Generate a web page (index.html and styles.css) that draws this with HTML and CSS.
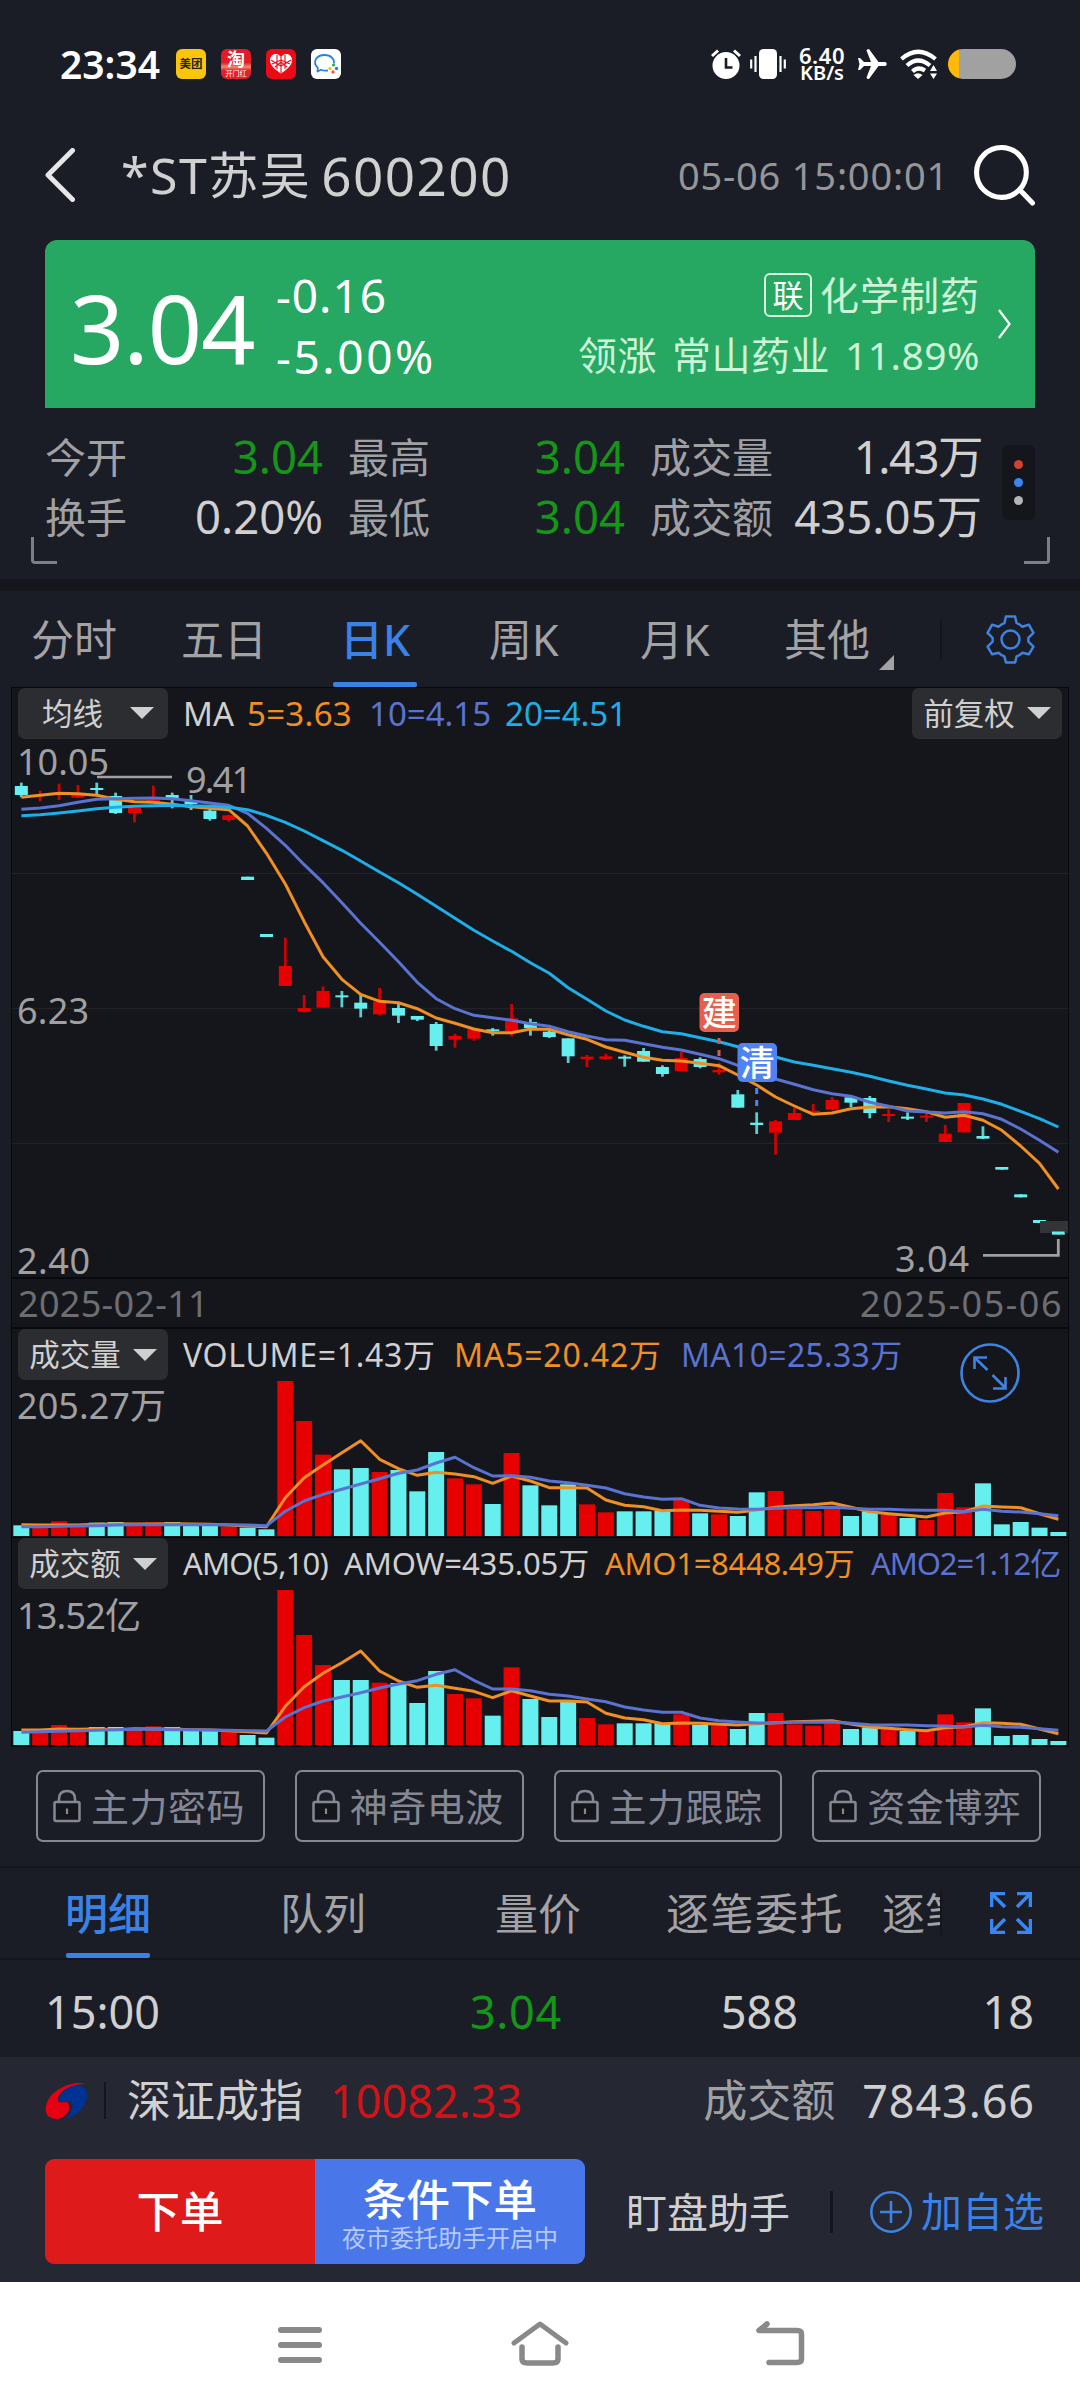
FILE: index.html
```html
<!DOCTYPE html>
<html lang="zh-CN">
<head>
<meta charset="utf-8">
<title>*ST苏吴 600200</title>
<link rel="stylesheet" href="styles.css">
</head>
<body>
<div class="phone">

<header class="status">
  <span class="clock">23:34</span>
  <span class="app meituan">美团</span>
  <span class="app taobao"><b>淘</b><i>开门红</i></span>
  <span class="app heart"><svg viewBox="0 0 30 30"><path d="M15 24.500C10 21 4 17 4 11.500C4 7.500 6.500 5 9.500 5C12 5 14 6.500 15 8.500C16 6.500 18 5 20.500 5C23.500 5 26 7.500 26 11.500C26 17 20 21 15 24.500Z" fill="#fff"/><path d="M15 8V24M11 6V20M19 6V20M5 11L15 17L25 11M6 15L15 11L24 15M9 18L15 13L21 18" stroke="#ee0a14" stroke-width="1.100" fill="none"/></svg></span>
  <span class="app wecom"><svg viewBox="0 0 30 30"><path d="M17 21.500C14 22 11.500 21.500 10 20.800L6.500 22.500L6.800 18.800C1 13.500 5 6 13.500 6C20 6 23.500 10 23 14.500" fill="none" stroke="#2383e2" stroke-width="1.800" stroke-linejoin="round"/><circle cx="22.500" cy="16" r="1.600" fill="#2fae3e"/><circle cx="25.500" cy="19.500" r="1.700" fill="#2383e2"/><circle cx="22" cy="23" r="1.700" fill="#f25b22"/><circle cx="19" cy="19.500" r="1.600" fill="#f9b912"/></svg></span>
  <span class="grow"></span>
  <svg class="s-alarm" viewBox="0 0 30 30"><circle cx="15" cy="16.500" r="13.500" fill="#fff"/><path d="M1 7L7 1.500M23 1.500L29 7" stroke="#fff" stroke-width="3"/><path d="M15 9V18.500H21.500" fill="none" stroke="#1b1d26" stroke-width="2.600"/></svg>
  <svg class="s-vibe" viewBox="0 0 36 30"><rect x="9" y="0" width="18" height="30" rx="4.500" fill="#fff"/><path d="M5.500 7V23M30.500 7V23M1.200 10.500V19.500M34.800 10.500V19.500" stroke="#fff" stroke-width="2.200"/></svg>
  <span class="speed"><span>6.40</span><span>KB/s</span></span>
  <svg class="s-plane" viewBox="0 0 30 30"><path d="M0 9H2L6 13H13L8.500 1.500Q8.500 0 11 0L20.500 13H27.500Q30 15 27.500 17H20.500L11 30Q8.500 30 8.500 28.500L13 17H6L2 21H0L1.500 15Z" fill="#fff"/></svg>
  <svg class="s-wifi" viewBox="0 0 38 30"><path d="M1.500 10Q18 -4.500 35.500 10M7 16.500Q18 6.500 30 16.500M12.500 22.500Q18 17 25 21.500" fill="none" stroke="#fff" stroke-width="4.200"/><path d="M13.500 26Q18 22.500 22.500 26L18 30Z" fill="#fff"/><path d="M33.500 16L37 22H30ZM33.500 30L37 24.500H30Z" fill="#fff"/></svg>
  <span class="battery"></span>
</header>

<nav class="titlebar">
  <svg class="back" viewBox="0 0 30 54"><path d="M27.500 2.500L3 27L27.500 51.500" fill="none" stroke="#e6e6e6" stroke-width="5" stroke-linecap="round" stroke-linejoin="round"/></svg>
  <h1><span>*ST苏吴</span><span>600200</span></h1>
  <time>05-06 15:00:01</time>
  <svg class="search" viewBox="0 0 60 60"><circle cx="27" cy="27" r="24.500" fill="none" stroke="#fff" stroke-width="5"/><path d="M45 44L57.500 57" stroke="#fff" stroke-width="5" stroke-linecap="round"/></svg>
</nav>

<section class="quote">
  <strong class="price">3.04</strong>
  <div class="change"><span>-0.16</span><span>-5.00%</span></div>
  <div class="sector">
    <div><em>联</em><span class="sec">化学制药</span></div>
    <div class="lead"><span>领涨</span><span>常山药业</span><span>11.89%</span></div>
  </div>
  <svg class="go" viewBox="0 0 15 30"><path d="M2 1L12.500 15L2 29" fill="none" stroke="#fff" stroke-width="2.200"/></svg>
</section>

<section class="stats">
  <div class="statgrid">
    <label>今开</label><b class="dn">3.04</b><label>最高</label><b class="dn">3.04</b><label>成交量</label><b class="tight">1.43万</b>
    <label>换手</label><b>0.20%</b><label>最低</label><b class="dn">3.04</b><label>成交额</label><b>435.05万</b>
  </div>
  <div class="dots"><i></i><i></i><i></i></div>
  <span class="corner left"></span><span class="corner right"></span>
</section>

<nav class="periods">
  <span>分时</span><span>五日</span><span class="on">日K</span><span>周K</span><span>月K</span><span class="more">其他</span>
  <svg class="gear" viewBox="0 0 48 48"><path d="M19.500 1.500H28.500L30 8Q33 9 35.500 11.500L42 9.500L46.500 17.500L41.500 22.500V26L46.500 31L42 38.500L35.500 37Q33 39.500 30 40.500L28.500 46.500H19.500L18 40.500Q15 39.500 12.500 37L6 38.500L1.500 31L6.500 26V22.500L1.500 17.500L6 9.500L12.500 11.500Q15 9 18 8Z" fill="none" stroke="#3f83e2" stroke-width="2.400" stroke-linejoin="round"/><circle cx="24" cy="24" r="8.800" fill="none" stroke="#3f83e2" stroke-width="2.400"/></svg>
</nav>

<main class="chart">
  <section class="pane price-pane">
    <div class="legend">
      <span class="pick wide">均线<i></i></span>
      <span class="w ma">MA</span><span class="o ma5">5=3.63</span><span class="p ma10">10=4.15</span><span class="c ma20">20=4.51</span>
      <span class="pick end">前复权<i></i></span>
    </div>
    <svg class="plot" id="kline" viewBox="12 738 1056 539">
      <path d="M12 873.500H1068M12 1008.500H1068M12 1143.500H1068" stroke="#212226" stroke-width="1.500"/>
      <g id="candles"></g>
      <path d="M97 777H172" stroke="#a0a0a3" stroke-width="2.500"/>
      <g class="axis">
        <text x="17" y="775" textLength="92">10.05</text>
        <text x="186" y="793" textLength="66">9.41</text>
        <text x="17" y="1024" textLength="72">6.23</text>
        <text x="17" y="1274" textLength="73">2.40</text>
        <text x="895" y="1272" textLength="74">3.04</text>
      </g>
      <rect x="1040" y="1221" width="28" height="12" fill="#333436"/>
      <path d="M1052 1233H1064.500" stroke="#66efef" stroke-width="3"/>
      <path d="M983 1255.300H1058.300V1239" fill="none" stroke="#a0a0a3" stroke-width="2.800"/>
      <path d="M719 1038V1056" stroke="#c7625a" stroke-width="3" stroke-dasharray="6"/>
      <path d="M756.700 1088V1107" stroke="#4f82f2" stroke-width="3" stroke-dasharray="6"/>
      <rect x="699.500" y="993" width="39.500" height="39" rx="5" fill="#e65f4d"/>
      <rect x="737.500" y="1043" width="39.500" height="39" rx="5" fill="#4f82f2"/>
      <text class="mark" x="719.300" y="1026">建</text>
      <text class="mark" x="757.200" y="1076">清</text>
    </svg>
  </section>
  <div class="dates"><span>2025-02-11</span><span>2025-05-06</span></div>
  <section class="pane vol-pane">
    <div class="legend">
      <span class="pick">成交量<i></i></span>
      <span class="w v0">VOLUME=1.43万</span><span class="o v1">MA5=20.42万</span><span class="p v2">MA10=25.33万</span>
    </div>
    <svg class="plot" id="volume" viewBox="12 1380 1056 157"><g class="axis"><text x="17" y="1419" textLength="149">205.27万</text></g></svg>
    <svg class="expand" viewBox="0 0 60 60"><circle cx="30" cy="30" r="28.500" fill="none" stroke="#3f83e2" stroke-width="2.600"/><path d="M27.500 27L14.500 14.500M14.500 26V14.500H27M32.500 32L45.500 45M45.500 34V45.500H33" fill="none" stroke="#3f83e2" stroke-width="2.600"/></svg>
  </section>
  <section class="pane amo-pane">
    <div class="legend small">
      <span class="pick">成交额<i></i></span>
      <span class="w a0">AMO(5,10)</span><span class="w a1">AMOW=435.05万</span><span class="o a2">AMO1=8448.49万</span><span class="p a3">AMO2=1.12亿</span>
    </div>
    <svg class="plot" id="amount" viewBox="12 1589 1056 157"><g class="axis"><text x="17" y="1629" textLength="124">13.52亿</text></g></svg>
  </section>
</main>

<section class="locks">
  <button><svg viewBox="0 0 28 34"><use href="#lock"/></svg>主力密码</button>
  <button><svg viewBox="0 0 28 34"><use href="#lock"/></svg>神奇电波</button>
  <button><svg viewBox="0 0 28 34"><use href="#lock"/></svg>主力跟踪</button>
  <button><svg viewBox="0 0 28 34"><use href="#lock"/></svg>资金博弈</button>
</section>
<svg class="defs"><symbol id="lock" viewBox="0 0 28 34"><path d="M6 13V10Q6 2 14 2T22 10V13" fill="none" stroke="#858894" stroke-width="2.500"/><rect x="1.500" y="13" width="25" height="19" rx="1.500" fill="#15161b" stroke="#858894" stroke-width="2.500"/><path d="M14 19.500V25" stroke="#858894" stroke-width="2.200"/></symbol></svg>

<nav class="details">
  <div class="tabs"><span class="on">明细</span><span>队列</span><span>量价</span><span>逐笔委托</span><span>逐笔成交</span></div>
  <svg class="full" viewBox="0 0 42 42"><path d="M1.500 15V1.500H15M2 2L15 15M27 1.500H40.500V15M40 2L27 15M1.500 27V40.500H15M2 40L15 27M27 40.500H40.500V27M40 40L27 27" fill="none" stroke="#3b86ee" stroke-width="3.600"/></svg>
</nav>
<div class="tick"><span>15:00</span><span class="dn">3.04</span><span>588</span><span>18</span></div>

<footer>
  <div class="index">
    <svg class="logo" viewBox="0 0 42 38"><path d="M40 2C28 -2 4 8 1 24C-1 33 5 37 11 37C22 37 28 25 22 20C17 20 12 22 13 16C15 8 28 2 40 2Z" fill="#e60012"/><path d="M29 4C37 2 42 6 42 14C41 26 31 35 19 37C29 30 30 21 24 19C18 20 12 21 14 15C17 9 23 5 29 4Z" fill="#003294"/></svg>
    <span class="name">深证成指</span><span class="up">10082.33</span>
    <span class="amt">成交额</span><span class="amtv">7843.66</span>
  </div>
  <div class="actions">
    <button class="order">下单</button>
    <button class="cond"><b>条件下单</b><small>夜市委托助手开启中</small></button>
    <span class="watch">盯盘助手</span>
    <svg class="plus" viewBox="0 0 42 42"><circle cx="21" cy="21" r="19.700" fill="none" stroke="#3f83e2" stroke-width="2.600"/><path d="M10 21H32M21 10V32" stroke="#3f83e2" stroke-width="2.600"/></svg>
    <span class="fav">加自选</span>
  </div>
</footer>

<nav class="system">
  <svg viewBox="0 0 58 46"><path d="M10 9H48M10 24H48M10 39H48" stroke="#898989" stroke-width="6" stroke-linecap="round"/></svg>
  <svg viewBox="0 0 58 46"><path d="M3 22L29 3L55 22" fill="none" stroke="#898989" stroke-width="5" stroke-linecap="round" stroke-linejoin="round"/><path d="M11 26V38Q11 42 16 42H42Q47 42 47 38V26" fill="none" stroke="#898989" stroke-width="5.500" stroke-linecap="round"/></svg>
  <svg viewBox="0 0 58 46"><path d="M16 3L8 9.500H46Q50.500 9.500 50.500 13V38Q50.500 41.500 46 41.500H18" fill="none" stroke="#898989" stroke-width="5.500" stroke-linecap="round" stroke-linejoin="round"/></svg>
</nav>
</div>
<script src="chart.js"></script>
</body>
</html>
```
FILE: styles.css
```css
* { box-sizing: border-box; }
body { margin: 0; background: #1b1d26; font-family: "Noto Sans", "Noto Sans CJK SC", sans-serif; color: #d0d0d0; }
h1, b, em, i { font-weight: 400; font-style: normal; margin: 0; }
button { border: 0; background: none; font: inherit; color: inherit; padding: 0; }
svg { display: block; flex: none; }
span, b, label, time, strong { white-space: nowrap; }
.phone { width: 1080px; height: 2408px; overflow: hidden; display: flex; flex-direction: column; line-height: 1; }
.phone > * { flex: none; }
.grow { flex: 1; }
.defs { position: absolute; width: 0; height: 0; }
.dn { color: #149618 !important; }

/* status bar */
.status { height: 128px; padding: 0 64px 0 60px; display: flex; align-items: center; color: #fff; }
.clock { width: 116px; font-size: 39px; font-weight: 600; margin-top: -2px; }
.app { width: 30px; height: 30px; border-radius: 6px; margin-right: 15px; overflow: hidden; display: flex; align-items: center; justify-content: center; }
.app svg { width: 30px; height: 30px; }
.meituan { background: #fbc50b; color: #222; font-size: 11.500px; font-weight: 700; }
.taobao { background: linear-gradient(#e31b28 45%, #f08a6a 60%, #e0202c 72%); flex-direction: column; }
.taobao b { font-size: 18px; font-weight: 700; line-height: 20px; }
.taobao i { font-size: 7px; line-height: 10px; }
.heart { background: #ee0a14; }
.wecom { background: #fff; }
.s-alarm { width: 30px; height: 30px; margin-right: 9px; }
.s-vibe { width: 36px; height: 30px; margin-right: 11px; }
.speed { width: 50px; margin-right: 11px; font-size: 20px; font-weight: 600; line-height: 18px; text-align: center; display: flex; flex-direction: column; }
.speed span:first-child { font-size: 22px; letter-spacing: .6px; }
.s-plane { width: 30px; height: 30px; margin-right: 12px; }
.s-wifi { width: 38px; height: 30px; margin-right: 10px; }
.battery { width: 68px; height: 30px; border-radius: 15px; background: linear-gradient(90deg, #feb90b 11px, #a1a1a1 11px); }

/* title bar */
.titlebar { height: 94px; padding: 0 45px 0 45px; display: flex; align-items: center; }
.back { width: 30px; height: 54px; margin-right: 46px; }
.titlebar h1 { flex: 1; font-size: 53px; display: flex; align-items: center; gap: 10px; letter-spacing: 1.400px; }
.titlebar h1 span:first-child { font-size: 50px; letter-spacing: 1.500px; }
.titlebar time { font-size: 38px; color: #95969a; letter-spacing: .8px; margin-right: 25px; }
.search { width: 61px; height: 61px; }

/* quote card */
.quote { height: 168px; margin: 18px 45px 0; padding: 0 23px 0 25px; background: #27a862; border-radius: 12px 12px 0 0; display: flex; align-items: center; color: #fff; }
.price { width: 206px; font-size: 95px; letter-spacing: -1px; font-weight: 400; line-height: 140px; padding-top: 5px; }
.change { flex: 1; font-size: 46px; line-height: 61px; letter-spacing: 1px; display: flex; flex-direction: column; padding-top: 4px; }
.change span:last-child { letter-spacing: 2.600px; }
.sector { color: #cdf3d8; font-size: 39px; display: flex; flex-direction: column; align-items: flex-end; line-height: 60px; margin-right: 17px; padding-top: 2px; }
.sector div { display: flex; align-items: center; }
.sector em { width: 48px; height: 44px; border: 2px solid #d6f6df; border-radius: 6px; margin-right: 8px; font-size: 31px; line-height: 40px; text-align: center; color: #fff; }
.sec { letter-spacing: 1px; }
.lead { gap: 15px; letter-spacing: .5px; }
.go { width: 15px; height: 30px; }

/* statistics */
.stats { height: 171px; padding: 19px 45px 0; display: flex; position: relative; }
.statgrid { width: 937px; display: grid; grid-template-columns: 81px 197px 106px 196px 150px 1fr; grid-template-rows: 60px 60px; align-items: center; }
.statgrid label { font-size: 41px; color: #a0a1a5; }
.statgrid label:nth-of-type(3n+2), .statgrid label:nth-of-type(3n) { padding-left: 25px; }
.statgrid b { font-size: 45.500px; text-align: right; }
.statgrid .tight { letter-spacing: -1.500px; }
.dots { width: 33px; height: 75px; margin: 18px 0 0 20px; border-radius: 6px; background: #15161b; display: flex; flex-direction: column; align-items: center; justify-content: center; gap: 9px; }
.dots i { width: 9px; height: 9px; border-radius: 50%; background: #cb452f; }
.dots i:nth-child(2) { background: #3b86ee; }
.dots i:nth-child(3) { background: #b4b4b6; }
.corner { position: absolute; top: 129px; width: 26px; height: 27px; border-bottom: 3px solid #7d7f86; }
.corner.left { left: 31px; border-left: 3px solid #7d7f86; border-bottom-left-radius: 4px; }
.corner.right { right: 30px; border-right: 3px solid #7d7f86; border-bottom-right-radius: 4px; }

/* period tabs */
.periods { height: 108px; border-top: 12px solid #15161b; padding-left: 31px; display: grid; grid-template-columns: 150px 151px 157px 151px 144px 158px 1fr; align-items: center; position: relative; font-size: 43px; color: #a3a3a6; }
.periods span { height: 96px; line-height: 98px; position: relative; }
.periods .on { color: #3b82e6; font-weight: 500; padding-left: 8px; }
.periods .on::after { content: ""; position: absolute; left: 1px; bottom: 0; width: 84px; height: 5px; border-radius: 2px; background: #3b82e6; }
.periods .more { border-right: 2px solid #15161b; height: 43px; line-height: 43px; }
.more::after { content: ""; position: absolute; left: 95px; bottom: -9px; border-left: 15px solid transparent; border-bottom: 15px solid #a3a3a6; }
.gear { width: 49px; height: 49px; margin-left: 44px; }

/* charts */
.chart { width: 1058px; margin-left: 11px; border: 1px solid #08090c; background: #15161b; }
.pane { position: relative; }
.legend { height: 51px; display: flex; align-items: center; padding-left: 6px; font-size: 32px; }
.price-pane .legend { height: 50px; }
.legend > span:not(.pick) { flex: none; }
.pick { width: 150px; height: 51px; flex: none; background: #2c2d31; border-radius: 7px; display: flex; align-items: center; justify-content: center; gap: 12px; font-size: 30.500px; margin-right: 15px; }
.pick i { border: 12px solid transparent; border-top: 12px solid #d0d0d0; border-bottom: 0; }
.pick.wide { gap: 27px; padding-left: 10px; }
.pick.end { margin: 0 6px 0 auto; }
.w { color: #d0d0d0; } .o { color: #f08f24; } .p { color: #5a72d0; } .c { color: #1eaee8; }
.price-pane .legend { font-size: 33px; }
.ma { width: 64px; } .ma5 { width: 122px; letter-spacing: .3px; } .ma10 { width: 136px; }
.v0 { width: 271px; letter-spacing: .7px; } .v1 { width: 227px; letter-spacing: .8px; } .v2 { letter-spacing: .3px; }
.legend.small { font-size: 31px; }
.a0 { width: 161px; letter-spacing: -.8px; } .a1 { width: 261px; letter-spacing: -.1px; } .a2 { width: 266px; letter-spacing: -.3px; } .a3 { letter-spacing: -1.100px; }
.plot { width: 1056px; }
#kline { height: 539px; }
#volume, #amount { height: 157px; }
.axis { font-size: 36px; fill: #a0a0a3; }
.mark { font-size: 35px; font-weight: 500; fill: #fff; text-anchor: middle; }
.dates { height: 52px; border: solid #08090c; border-width: 2px 0; padding: 2px 5px 0 6px; display: flex; justify-content: space-between; align-items: center; font-size: 36px; letter-spacing: .3px; color: #6d6e72; }
.dates span:last-child { letter-spacing: 1.500px; }
.expand { position: absolute; left: 948px; top: 14px; width: 60px; height: 60px; }
.amo-pane { border-top: 1px solid #08090c; }

/* locked indicators */
.locks { height: 119px; padding: 23px 39px 0 36px; display: flex; gap: 30px; }
.locks button { flex: 1; height: 72px; border: 2px solid #858894; border-radius: 7px; display: flex; align-items: center; padding-left: 15px; gap: 10px; font-size: 38px; letter-spacing: .5px; color: #858894; white-space: nowrap; }
.locks svg { width: 28px; height: 34px; }

/* detail tabs */
.details { height: 94px; border: solid #14151b; border-width: 2px 0; display: flex; align-items: center; font-size: 43px; color: #a3a3a6; }
.tabs { width: 942px; height: 90px; overflow: hidden; padding-left: 65px; display: flex; align-items: center; position: relative; }
.tabs::after { content: ""; position: absolute; right: 0; top: 23px; width: 2px; height: 44px; background: #15161b; }
.tabs span { flex: none; height: 90px; line-height: 92px; position: relative; }
.tabs span:nth-child(1) { width: 215px; } .tabs span:nth-child(2) { width: 215px; } .tabs span:nth-child(3) { width: 171px; } .tabs span:nth-child(4) { width: 216px; letter-spacing: 1.500px; }
.tabs .on { color: #3b82e6; font-weight: 500; }
.tabs .on::after { content: ""; position: absolute; left: 1px; bottom: 0; width: 84px; height: 5px; border-radius: 2px; background: #3b82e6; }
.full { width: 42px; height: 42px; margin-left: 48px; }
.tick { height: 97px; padding: 6px 46px 0 45px; display: grid; grid-template-columns: 300px 217px 236px 1fr; align-items: center; font-size: 45px; text-align: right; }
.tick span:first-child { text-align: left; }
.tick .dn { letter-spacing: .7px; }

/* footer */
footer { height: 225px; background: #252733; }
.index { height: 88px; padding: 0 45px; display: flex; align-items: center; font-size: 45px; }
.index span { margin-top: -2px; }
.logo { width: 42px; height: 38px; margin-right: 17px; }
.name { border-left: 2px solid #15161b; line-height: 37px; padding-left: 21px; width: 226px; font-size: 44px; }
.up { color: #d01317; flex: 1; }
.amt { font-size: 44px; color: #a0a1a5; margin-right: 27px; }
.amtv { letter-spacing: .9px; }
.actions { padding: 14px 34px 0 45px; display: flex; align-items: center; font-size: 41px; }
.actions button { width: 270px; height: 105px; color: #fff; font-size: 43.500px; font-weight: 500; }
.order { background: #de1a1a; border-radius: 9px 0 0 9px; }
.cond { background: #4977e9; border-radius: 0 9px 9px 0; display: flex; flex-direction: column; align-items: center; padding-top: 15px !important; }
.cond b { font-weight: 500; line-height: 50px; }
.cond small { font-size: 24px; line-height: 28px; font-weight: 400; color: #b6c8f7; }
.watch { margin-left: 41px; width: 207px; border-right: 3px solid #15161b; line-height: 42px; }
.plus { width: 42px; height: 42px; margin: 0 9px 0 37px; }
.fav { color: #3b82e6; }

/* system navigation */
.system { height: 126px; background: #fff; padding: 0 271px; display: flex; justify-content: space-between; align-items: center; }
.system svg { width: 58px; height: 46px; margin-top: -2px; }
```
FILE: chart.js
```js
(function () {
  var NS = 'http://www.w3.org/2000/svg';
  var RED = '#e60000', CYAN = '#66efef';
  var ORANGE = '#f08f24', PURPLE = '#5a72d0', BLUE = '#1eaee8';
  var X0 = 21.35, STEP = 18.855;

  // [high, body top, body bottom, low, rising], offsets from the top of the plot in thirds of a pixel
  var candles = [
    [128,138,165,172,0],[152,163,168,184,1],[131,158,164,180,1],[135,163,173,174,1],[128,144,150,163,0],
    [158,168,219,222,0],[204,204,219,247,1],[137,180,186,190,1],[158,165,174,205,0],[165,182,192,210,0],
    [205,212,237,242,0],[224,226,240,245,1],[410,410,420,420,0],[582,582,591,591,0],[593,678,738,738,1],
    [765,804,815,818,1],[739,753,803,803,1],[753,766,772,802,0],[765,788,806,832,0],[744,785,823,826,1],
    [792,804,827,849,0],[828,828,839,843,0],[846,852,918,932,0],[882,888,899,923,1],[868,868,896,902,1],
    [864,868,873,887,0],[792,835,873,889,1],[836,846,864,887,0],[868,875,891,894,0],[895,895,949,969,0],
    [945,950,957,981,1],[941,949,957,960,1],[946,950,956,980,0],[924,933,965,965,0],[976,981,1002,1010,0],
    [935,954,993,993,1],[952,957,981,985,0],[968,990,997,1004,1],[1050,1063,1103,1103,0],[1117,1148,1155,1182,0],
    [1140,1144,1178,1244,1],[1104,1119,1140,1140,1],[1092,1112,1117,1122,1],[1071,1080,1109,1112,1],[1068,1072,1088,1101,0],
    [1068,1074,1119,1135,0],[1108,1122,1128,1146,1],[1117,1130,1136,1140,0],[1122,1127,1133,1146,1],[1155,1181,1206,1206,1],
    [1089,1089,1177,1178,1],[1159,1188,1196,1197,0],[1281,1281,1289,1289,0],[1363,1363,1372,1372,0],[1440,1440,1449,1449,0],
    [1473,1473,1483,1483,0]
  ];
  var ma5 = [172,166,160,161,166,178,185,187,193,200,205,209,258,340,432,545,650,718,763,784,788,806,834,850,867,878,878,867,868,884,898,921,937,952,961,963,970,977,1005,1035,1071,1098,1123,1119,1106,1101,1100,1106,1115,1132,1126,1141,1171,1218,1270,1347];
  var ma10 = [208,204,197,187,178,176,175,174,176,182,189,196,220,265,316,374,428,488,550,607,665,727,776,806,826,833,841,851,859,875,888,899,901,911,922,930,943,956,976,1000,1017,1033,1049,1061,1069,1087,1099,1113,1116,1119,1115,1121,1138,1167,1201,1237];
  var ma20 = [227,224,219,213,206,202,199,197,196,197,199,202,209,226,247,273,302,331,363,396,428,463,499,535,571,603,634,668,700,743,778,813,840,859,875,881,893,905,920,935,951,966,976,986,997,1009,1023,1036,1047,1059,1065,1077,1093,1114,1136,1161];

  var volume = {
    bars: [32,28,44,34,40,42,34,41,42,34,30,28,25,20,465,345,244,200,204,192,198,134,252,173,155,96,249,152,92,155,95,71,74,74,76,108,68,65,60,131,135,80,75,82,60,74,65,54,48,129,86,158,35,42,25,12],
    ma5: [34,33,33,33,35,36,36,36,37,36,35,33,30,28,115,175,213,250,286,230,202,182,191,186,178,158,180,165,145,145,144,108,92,88,76,78,77,74,71,78,86,91,94,99,86,73,67,62,57,69,73,90,87,85,67,50],
    ma10: [28,28,29,30,31,33,34,34,34,34,34,34,33,31,74,105,125,140,156,172,188,198,219,236,205,180,181,176,165,160,152,144,127,117,110,112,92,84,81,80,83,85,85,86,83,80,80,78,77,77,73,80,74,72,67,61]
  };
  var amount = {
    bars: [42,44,60,48,54,54,46,56,54,48,43,42,30,22,465,330,240,195,195,187,186,126,222,153,140,88,233,138,84,130,81,62,65,65,66,92,60,58,48,96,96,62,58,65,48,53,50,42,40,92,68,110,27,30,18,12],
    ma5: [45,45,48,47,48,46,49,48,48,46,45,43,40,36,116,175,215,247,282,222,192,173,179,170,161,142,163,147,132,132,129,95,81,76,64,66,65,62,60,64,67,70,71,73,63,54,50,46,43,52,55,67,65,62,48,34],
    ma10: [38,40,41,43,44,46,47,47,46,46,45,44,43,42,84,112,132,144,157,171,183,193,212,226,194,168,168,163,152,147,138,130,114,105,98,98,81,73,69,66,67,68,68,69,65,61,60,60,58,57,54,59,55,53,49,44]
  };

  function add(parent, tag, attrs) {
    var el = document.createElementNS(NS, tag);
    for (var k in attrs) el.setAttribute(k, attrs[k]);
    parent.appendChild(el);
  }
  function x(i) { return X0 + STEP * i; }
  function line(parent, data, base, sign, color) {
    var pts = data.map(function (v, i) { return x(i).toFixed(1) + ',' + (base + sign * v / 3).toFixed(1); });
    add(parent, 'polyline', { points: pts.join(' '), fill: 'none', stroke: color, 'stroke-width': 3, 'stroke-linejoin': 'round' });
  }

  var k = document.getElementById('candles');
  candles.forEach(function (c, i) {
    var color = c[4] ? RED : CYAN;
    add(k, 'rect', { x: x(i) - 1.4, y: 740 + c[0] / 3, width: 2.8, height: (c[3] - c[0]) / 3, fill: color, opacity: 0.85 });
    add(k, 'rect', { x: x(i) - 6.5, y: 740 + c[1] / 3, width: 13, height: (c[2] - c[1]) / 3, fill: color });
  });
  line(k, ma5, 740, 1, ORANGE);
  line(k, ma10, 740, 1, PURPLE);
  line(k, ma20, 740, 1, BLUE);

  function histogram(id, data, base) {
    var svg = document.getElementById(id);
    data.bars.forEach(function (h, i) {
      add(svg, 'rect', { x: x(i) - 8, y: base - h / 3, width: 16, height: h / 3, fill: candles[i][4] ? RED : CYAN });
    });
    line(svg, data.ma5, base, -1, ORANGE);
    line(svg, data.ma10, base, -1, PURPLE);
  }
  histogram('volume', volume, 1536);
  histogram('amount', amount, 1745);
})();
```
